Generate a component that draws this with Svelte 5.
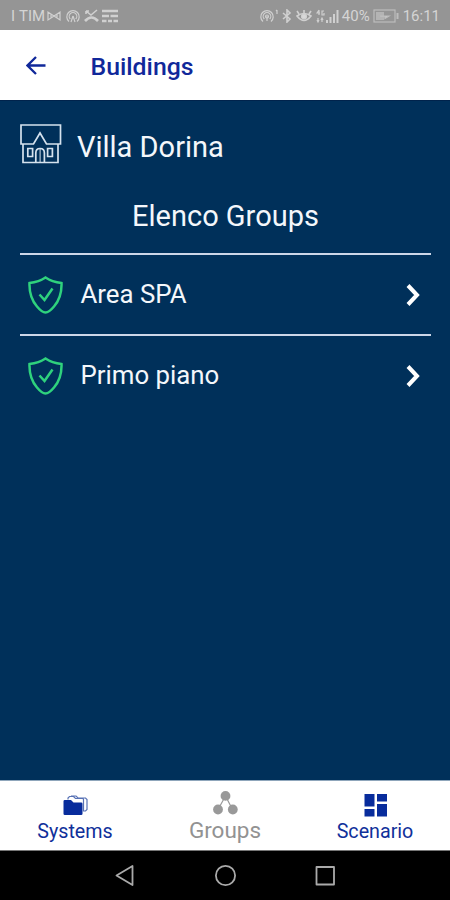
<script>
	let building = 'Villa Dorina';
	let groups = ['Area SPA', 'Primo piano'];
	let active = 'Groups';
	let tabs = ['Systems', 'Groups', 'Scenario'];
</script>

<div class="screen">
	<div class="status">
		<div class="status-left">
			<span class="sim">I</span>
			<span class="carrier">TIM</span>
			<svg width="14" height="12" viewBox="0 0 14 12">
				<path d="M1 2v8l6-4 6 4V2L7 6zM4 4v4M10 4v4" />
			</svg>
			<svg class="cast" width="16" height="14" viewBox="0 0 16 14">
				<path d="M4 12.5a6.2 6.2 0 1 1 8 0M5.3 10a3.8 3.8 0 1 1 5.4 0M8 7l-2 6M8 7l2 6" />
			</svg>
			<svg class="missed" width="15" height="14" viewBox="0 0 15 14">
				<path class="medium" d="M2 2l5 4 6-5M2 2v3M2 2h3" />
				<path class="heavy" d="M1 12q6.500-7 13 0" />
			</svg>
			<svg class="list" width="16" height="14" viewBox="0 0 16 14">
				<path class="heavy" d="M0 2h16M0 7h7M8.500 7H16M0 12h4.500M6 12h4M11.500 12H16" />
			</svg>
		</div>
		<div class="status-right">
			<svg width="20" height="14" viewBox="0 0 20 14">
				<path d="M4 12.500a6.200 6.200 0 1 1 8 0M5.300 10a3.800 3.800 0 1 1 5.400 0M8 7v5M18 1v4M17 2l1-1" />
				<circle cx="8" cy="7.500" r="1.500" />
			</svg>
			<svg class="bluetooth" width="10" height="14" viewBox="0 0 10 14">
				<path class="medium" d="M1 4l7 6-3 3V1l3 3-7 6" />
			</svg>
			<svg class="eye" width="16" height="14" viewBox="0 0 16 14">
				<path class="medium" d="M1 7q7-5 14 0q-7 9-14 0zM8 4V1M3 5L1 2M13 5l2-3" />
				<circle class="solid" cx="8" cy="7.500" r="2.500" />
			</svg>
			<svg class="signal" width="24" height="15" viewBox="0 0 24 15">
				<path d="M3 1L1 4h3M3 1v5M8 2H6v4h2V4M2 9v4M1 11l1 2 1-2M6 13V9M5 11l1-2 1 2" />
				<path class="thick" d="M11 14v-3M14.500 14V8M18 14V5M21.500 14V1" />
			</svg>
			<span class="percent">40%</span>
			<svg class="battery" width="26" height="14" viewBox="0 0 26 14">
				<rect x="1" y="1" width="21" height="12" />
				<rect class="charge" x="3" y="3" width="8" height="8" />
				<path class="thick" d="M24.500 4v6" />
				<path class="solid" d="M7 7h9l-4 2.500V8z" />
			</svg>
			<span class="clock">16:11</span>
		</div>
	</div>

	<header>
		<svg width="20" height="20" viewBox="0 0 20 20">
			<path d="M19.500 10.500H1.500M10 2L1.500 10.500l8.500 8.500" />
		</svg>
		<h1>Buildings</h1>
	</header>

	<main>
		<div class="building">
			<svg width="42" height="40" viewBox="0 0 42 40">
				<path d="M3 20v18.500h35V20M6.500 1H1v19h12.500l6.500-11 6.500 11H40.500V1H6.500" />
				<path d="M15.800 38V29q0-4.500 4.300-4.500t4.300 4.500v9" />
				<path class="door" d="M20.100 25v13" />
				<path d="M7.800 24.500h4.800v8H7.800zM27.600 24.500h4.800v8h-4.800z" />
			</svg>
			<span>{building}</span>
		</div>
		<h2>Elenco Groups</h2>
		<div class="list-groups">
			{#each groups as group}
				<div class="group">
					<svg class="shield" width="36" height="38" viewBox="0 0 36 38">
						<path d="M18.500 1.500Q12 5.800 2.500 7Q2 21 10 30.500Q15 36.500 18.500 36.500Q22 36.500 27 30.500Q35 21 34.500 7Q25 5.800 18.500 1.500z" />
						<path d="M12.500 18.500l5 5.500L25.500 12.500" />
					</svg>
					<span>{group}</span>
					<svg class="chevron" width="14" height="22" viewBox="0 0 14 22">
						<path d="M2 1.500L11 11l-9 9.500" />
					</svg>
				</div>
			{/each}
		</div>
	</main>

	<nav>
		{#each tabs as tab}
			<div class="tab" class:active={tab === active}>
				{#if tab === 'Systems'}
					<svg width="26" height="24" viewBox="0 0 26 24">
						<path class="outline" d="M6 5.500V4L7.500 2.500h4l2 2h7q1 0 1 1V17h2l1.500-1.500V5.500L23.500 4H16l-2-2H9" />
						<path d="M2.800 6H9l2.500 2.500h7.700q1.300 0 1.300 1.300v9.900q0 1.300-1.300 1.300H2.800Q1.500 21 1.500 19.700V7.300Q1.500 6 2.800 6z" />
					</svg>
				{:else if tab === 'Groups'}
					<svg width="26" height="24" viewBox="0 0 26 24">
						<path class="outline" d="M13.500 5L6 18.500M13.500 5l7 13.500" />
						<circle cx="13.500" cy="4.900" r="4.900" />
						<circle cx="6" cy="18.500" r="4.900" />
						<circle cx="20.800" cy="18.500" r="4.900" />
					</svg>
				{:else}
					<svg width="26" height="24" viewBox="0 0 26 24">
						<path d="M2.500 0h10v12.500h-10zM15 0h10v7.500H15zM2.500 15h10v7.500h-10zM15 10h10v12.500H15z" />
					</svg>
				{/if}
				<span>{tab}</span>
			</div>
		{/each}
	</nav>

	<div class="system">
		<svg width="22" height="24" viewBox="0 0 22 24">
			<path d="M18.500 2v19L2.500 11.500z" />
		</svg>
		<svg width="22" height="24" viewBox="0 0 22 24">
			<circle cx="11.500" cy="11.500" r="9.600" />
		</svg>
		<svg width="22" height="24" viewBox="0 0 22 24">
			<rect x="2.500" y="3" width="17.500" height="17.500" />
		</svg>
	</div>
</div>

<style>
	:global(body) {
		background: #000;
	}

	.screen {
		display: flex;
		flex-direction: column;
		width: 450px;
		height: 900px;
		overflow: hidden;
		background: #00305a;
		font-family: Roboto, sans-serif;
	}

	svg {
		flex: none;
		fill: none;
	}

	span {
		white-space: nowrap;
	}

	.status {
		display: flex;
		justify-content: space-between;
		box-sizing: border-box;
		height: 30px;
		padding: 2px 10px 0 11px;
		background: #959595;
		color: #d4d4d4;
		font-size: 15px;
	}

	.status-left,
	.status-right {
		display: flex;
		align-items: center;
	}

	.status svg {
		stroke: #d0d0d0;
		stroke-width: 1.2;
	}

	.status .medium {
		stroke-width: 1.6;
	}

	.status .thick {
		stroke-width: 2;
	}

	.status .heavy {
		stroke-width: 2.6;
	}

	.status .solid {
		fill: #d8d8d8;
	}

	.status .battery {
		stroke: #bdbdbd;
	}

	.status .charge {
		fill: #b4b4b4;
		stroke: none;
	}

	.sim {
		width: 8px;
	}

	.carrier {
		width: 28px;
	}

	.cast {
		margin-left: 4px;
	}

	.missed {
		margin-left: 3px;
	}

	.list {
		margin-left: 3px;
	}

	.bluetooth {
		margin-left: 3px;
	}

	.eye {
		margin-left: 4px;
	}

	.signal {
		margin: 0 2px 0 4px;
	}

	.battery {
		margin: 0 4px 0 3px;
	}

	header {
		display: flex;
		align-items: center;
		box-sizing: border-box;
		height: 70px;
		padding: 0 26px;
		background: #fff;
	}

	header svg {
		stroke: #10289a;
		stroke-width: 2.3;
	}

	h1 {
		margin: 2px 0 0 44.500px;
		color: #10289a;
		font-size: 24.800px;
		font-weight: 500;
	}

	main {
		flex: 1;
		padding: 23px 19px 0 20px;
		color: #f4f7fb;
		border-top: 1px solid #00234c;
	}

	.building {
		display: flex;
		align-items: center;
		height: 40px;
		font-size: 29px;
	}

	.building span {
		margin: 6px 0 0 15px;
	}

	.building svg {
		stroke: #d5e2ee;
		stroke-width: 1.7;
	}

	.building .door {
		stroke-width: 1;
	}

	h2 {
		margin: 35px 0 0;
		height: 34px;
		line-height: 34px;
		text-align: center;
		font-size: 29px;
		font-weight: 400;
	}

	.list-groups {
		margin-top: 20px;
	}

	.group {
		display: flex;
		align-items: center;
		box-sizing: border-box;
		height: 81px;
		padding: 0 11px 0 7px;
		border-top: 2px solid #ccd6e8;
		font-size: 25.800px;
	}

	.group span {
		flex: 1;
		margin: -1px 0 0 17.500px;
	}

	.shield {
		stroke: #2fd27d;
		stroke-width: 2.5;
	}

	.chevron {
		stroke: #fff;
		stroke-width: 4;
	}

	nav {
		display: flex;
		box-sizing: border-box;
		height: 71px;
		background: #fff;
		border-top: 1px solid #8fa6bb;
		border-bottom: 1px solid #777;
	}

	.tab {
		display: flex;
		flex: 1;
		flex-direction: column;
		align-items: center;
		padding-top: 13px;
		color: #10309a;
		font-size: 19.700px;
		line-height: 26px;
	}

	.tab svg {
		fill: #082c9c;
		margin-bottom: 1px;
	}

	.tab .outline {
		fill: none;
		stroke: #5872b5;
		stroke-width: 1.2;
	}

	.tab.active {
		padding-top: 10px;
		color: #929292;
		font-size: 22.500px;
	}

	.tab.active svg {
		fill: #999;
		margin-bottom: 2px;
	}

	.tab.active .outline {
		stroke: #999;
	}

	.system {
		display: flex;
		justify-content: space-between;
		align-items: center;
		box-sizing: border-box;
		height: 49px;
		padding: 0 114px;
		background: #000;
	}

	.system svg {
		stroke: #aaa;
		stroke-width: 1.8;
		stroke-linejoin: round;
	}
</style>
